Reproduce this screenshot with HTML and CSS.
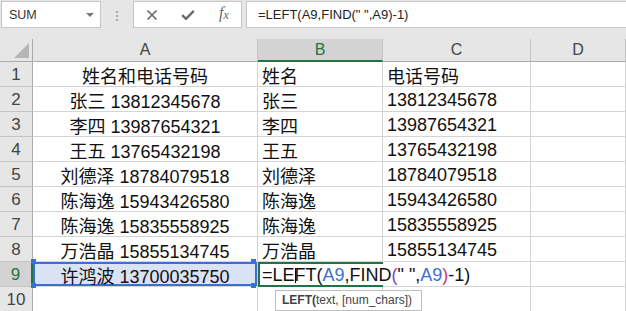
FILE: index.html
```html
<!DOCTYPE html>
<html lang="zh-CN">
<head>
    <meta charset="UTF-8">
    <title>LEFT FIND</title>
    <link rel="stylesheet" href="styles.css">
</head>
<body>
    <div class="formula-bar">
        <div class="name-box"><span>SUM</span><span class="caret"></span></div>
        <div class="grip"><i></i><i></i><i></i></div>
        <div class="fx-box">
            <svg width="12" height="12" viewBox="0 0 12 12"><path d="M1.5 1.5 L10.5 10.5 M10.5 1.5 L1.5 10.5" stroke="#6a6a6a" stroke-width="1.7" fill="none"/></svg>
            <svg width="14" height="12" viewBox="0 0 14 12"><path d="M1.2 6.2 L5 9.8 L12.8 1.8" stroke="#6a6a6a" stroke-width="2.4" fill="none"/></svg>
            <span class="fx">f<sub>x</sub></span>
        </div>
        <div class="formula-input">=LEFT(A9,FIND(" ",A9)-1)</div>
    </div>

    <div class="sheet">
        <div class="hd corner"><span class="tri"></span></div>
        <div class="hd">A</div>
        <div class="hd on">B</div>
        <div class="hd">C</div>
        <div class="hd">D</div>

        <div class="rh">1</div>
        <div class="c mid">姓名和电话号码</div>
        <div class="c">姓名</div>
        <div class="c">电话号码</div>
        <div class="c"></div>

        <div class="rh">2</div>
        <div class="c mid">张三 13812345678</div>
        <div class="c">张三</div>
        <div class="c">13812345678</div>
        <div class="c"></div>

        <div class="rh">3</div>
        <div class="c mid">李四 13987654321</div>
        <div class="c">李四</div>
        <div class="c">13987654321</div>
        <div class="c"></div>

        <div class="rh">4</div>
        <div class="c mid">王五 13765432198</div>
        <div class="c">王五</div>
        <div class="c">13765432198</div>
        <div class="c"></div>

        <div class="rh">5</div>
        <div class="c mid">刘德泽 18784079518</div>
        <div class="c">刘德泽</div>
        <div class="c">18784079518</div>
        <div class="c"></div>

        <div class="rh">6</div>
        <div class="c mid">陈海逸 15943426580</div>
        <div class="c">陈海逸</div>
        <div class="c">15943426580</div>
        <div class="c"></div>

        <div class="rh">7</div>
        <div class="c mid">陈海逸 15835558925</div>
        <div class="c">陈海逸</div>
        <div class="c">15835558925</div>
        <div class="c"></div>

        <div class="rh">8</div>
        <div class="c mid">万浩晶 15855134745</div>
        <div class="c">万浩晶</div>
        <div class="c">15855134745</div>
        <div class="c"></div>

        <div class="rh on">9</div>
        <div class="c mid ref">许鸿波 13700035750</div>
        <div class="c act"><span class="edit">=LE<span class="cursor"></span>FT(<span class="r">A9</span>,FIND<span class="p1">(</span>" ",<span class="r">A9</span><span class="p2">)</span>-1)</span></div>
        <div class="c"></div>
        <div class="c"></div>

        <div class="rh">10</div>
        <div class="c"></div>
        <div class="c"></div>
        <div class="c"></div>
        <div class="c"></div>

        <div class="tip"><b>LEFT(</b>text, [num_chars])</div>
    </div>
</body>
</html>
```

FILE: styles.css
```css
body {
    margin: 0;
    width: 626px;
    height: 311px;
    overflow: hidden;
    background-color: #fff;
    font-family: "Liberation Sans", "Noto Sans CJK SC", sans-serif;
}
.formula-bar {
    display: flex;
    align-items: flex-start;
    height: 39px;
    padding: 1px 0 0 1px;
    box-sizing: border-box;
    background-color: #e6e6e6;
}
.name-box {
    width: 100px;
    height: 27px;
    box-sizing: border-box;
    border: 1px solid #c6c6c6;
    background-color: #fff;
    display: flex;
    align-items: center;
    justify-content: space-between;
    padding: 0 6px 0 7px;
    font-size: 12.5px;
    color: #333;
}
.caret {
    width: 0;
    height: 0;
    border-left: 4px solid transparent;
    border-right: 4px solid transparent;
    border-top: 4px solid #777;
}
.grip {
    width: 32px;
    display: flex;
    flex-direction: column;
    align-items: center;
    gap: 2px;
    padding-top: 10px;
}
.grip i {
    width: 2px;
    height: 2px;
    background-color: #a6a6a6;
}
.fx-box {
    width: 109px;
    height: 27px;
    box-sizing: border-box;
    border: 1px solid #c6c6c6;
    background-color: #fff;
    display: grid;
    grid-template-columns: 36px 36px 36px;
    align-items: center;
    justify-items: center;
}
.fx {
    font-family: "Liberation Serif", serif;
    font-style: italic;
    font-size: 16px;
    color: #666;
    margin-top: -2px;
}
.fx sub {
    font-size: 12px;
    vertical-align: -1px;
}
.formula-input {
    flex: 1;
    margin-left: 4px;
    height: 27px;
    box-sizing: border-box;
    border: 1px solid #c6c6c6;
    border-right: none;
    background-color: #fff;
    padding-left: 11px;
    font-size: 13px;
    line-height: 25px;
    color: #222;
    white-space: pre;
}
.sheet {
    position: relative;
    display: grid;
    grid-template-columns: 33px 225px 125px 148px 95px;
    grid-template-rows: 23px;
    grid-auto-rows: 25px;
}
.hd {
    box-sizing: border-box;
    background-color: #e6e6e6;
    color: #444;
    border-right: 1px solid #c4c4c4;
    border-bottom: 1px solid #ababab;
    font-size: 16px;
    display: flex;
    align-items: center;
    justify-content: center;
}
.hd.on {
    background-color: #d3d3d3;
    color: #217346;
    border-bottom: 2px solid #217346;
}
.corner {
    border-right-color: #ababab;
    justify-content: flex-end;
    align-items: flex-end;
    padding: 0 3px 3px 0;
}
.tri {
    width: 15px;
    height: 15px;
    background-color: #b5b5b5;
    clip-path: polygon(100% 0, 100% 100%, 0 100%);
}
.rh {
    box-sizing: border-box;
    background-color: #e6e6e6;
    color: #444;
    border-right: 1px solid #ababab;
    border-bottom: 1px solid #c4c4c4;
    font-size: 17px;
    display: flex;
    align-items: center;
    justify-content: center;
    padding-top: 2px;
}
.rh.on {
    background-color: #d3d3d3;
    color: #217346;
    border-right: 2px solid #217346;
}
.c {
    box-sizing: border-box;
    border-right: 1px solid #d4d4d4;
    border-bottom: 1px solid #d4d4d4;
    font-size: 18px;
    color: #111;
    display: flex;
    align-items: center;
    padding: 2px 4px 0 4px;
    white-space: nowrap;
}
.c.mid {
    justify-content: center;
}
.c.ref {
    position: relative;
    background-color: #dae3f3;
    box-shadow: inset 0 0 0 2px #3b6fd4;
}
.c.ref::before {
    content: "";
    position: absolute;
    left: -2px;
    top: -3px;
    width: 5px;
    height: 5px;
    background-color: #3b6fd4;
    box-shadow: 220px 0 #3b6fd4, 0 24px #3b6fd4, 220px 24px #3b6fd4;
}
.c.act {
    position: relative;
    border-right: none;
    border-bottom: none;
    background-color: #fff;
    box-shadow: inset 2px 0 #217346, inset 0 2px #217346, inset 0 -2px #217346;
    z-index: 1;
}
.edit {
    color: #111;
}
.cursor {
    display: inline-block;
    width: 0;
    height: 15px;
    border-left: 1px solid #000;
    margin-right: -1px;
    vertical-align: -2px;
}
.r {
    color: #3b6fd4;
}
.p1 {
    color: #8e44ad;
}
.p2 {
    color: #d6336c;
}
.tip {
    position: absolute;
    left: 275px;
    top: 251px;
    width: 147px;
    height: 21px;
    box-sizing: border-box;
    border: 1px solid #bdbdbd;
    background-color: #fff;
    padding-left: 6px;
    font-size: 12px;
    line-height: 19px;
    color: #444;
    white-space: nowrap;
    z-index: 2;
}
.tip b {
    color: #444;
}
```
